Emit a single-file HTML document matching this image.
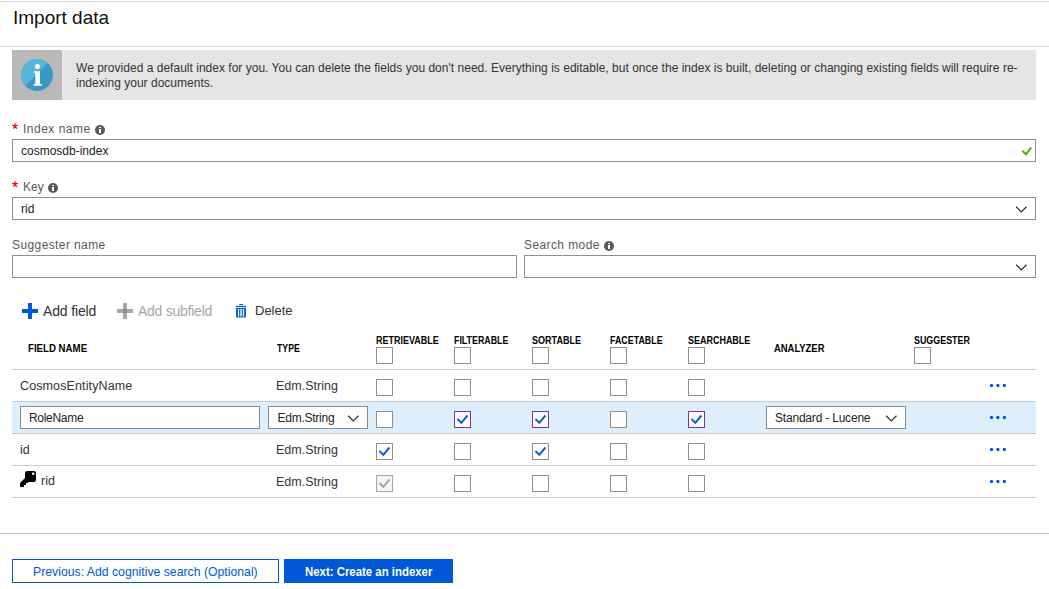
<!DOCTYPE html>
<html><head><meta charset="utf-8">
<style>
*{margin:0;padding:0;box-sizing:border-box}
html,body{width:1049px;height:589px;overflow:hidden;background:#fff}
body{position:relative;font-family:"Liberation Sans",sans-serif;color:#333;-webkit-font-smoothing:antialiased}
.a{position:absolute}
.t{position:absolute;white-space:nowrap;line-height:1}
.hl{position:absolute;height:1px;background:#c9c9c9}
.inp{position:absolute;border:1px solid #8f8f8f;background:#fff}
.cb{position:absolute;width:17px;height:17px;border:1px solid #8f8f8f;background:#fff}
.lbl{font-size:12px;color:#595959}
.star{color:#e00b1c;font-size:13px}
.ii{position:absolute;width:10px;height:10px;border-radius:50%;background:#5a5a5a}
.ii:before{content:"";position:absolute;left:4px;top:2px;width:2px;height:1px;background:#fff}
.ii:after{content:"";position:absolute;left:4px;top:4px;width:2px;height:4px;background:#fff}
.th{transform-origin:0 0;font-size:10px;font-weight:bold;color:#000}
.rt{font-size:12.5px;color:#333}
.dots{position:absolute;width:17px;height:4px}
.dots i{position:absolute;top:0;width:3.4px;height:3.4px;border-radius:50%;background:#0058d6}
</style></head><body>

<!-- header -->
<div class="hl" style="left:0;top:1px;width:1049px;background:#d3d3d3"></div>
<div class="t" style="left:13px;top:8px;font-size:19px;color:#111">Import data</div>
<div class="hl" style="left:0;top:46px;width:1049px;background:#d6d6d6"></div>

<!-- info box -->
<div class="a" style="left:12px;top:50px;width:1024px;height:50px;background:#e5e5e5"></div>
<div class="a" style="left:12px;top:50px;width:50px;height:50px;background:#b9b9b9"></div>
<svg class="a" style="left:21px;top:59px" width="32" height="32" viewBox="0 0 32 32">
 <defs><clipPath id="cc"><circle cx="16" cy="16" r="16"/></clipPath></defs>
 <g clip-path="url(#cc)">
  <rect width="32" height="32" fill="#3999c6"/>
  <polygon points="0,0 31,0 0,31" fill="#59b4d9"/>
 </g>
 <circle cx="16.4" cy="7.4" r="2.5" fill="#fff"/>
 <path d="M12.9 12.2 H19 V24.9 H20.7 V26.8 H12.7 V24.9 H14.3 V13.8 H12.9 Z" fill="#fff"/>
</svg>
<div class="t" style="left:76px;top:61px;font-size:12px;line-height:15px;color:#333;letter-spacing:0.016px;white-space:normal;width:960px">We provided a default index for you. You can delete the fields you don't need. Everything is editable, but once the index is built, deleting or changing existing fields will require re-<br>indexing your documents.</div>

<!-- index name -->
<svg class="a" style="left:11px;top:122px" width="8" height="8" viewBox="0 0 8 8"><path d="M4 4V1.7M4 4L1.6 3.4M4 4L6.4 3.4M4 4L2.5 6.3M4 4L5.5 6.3" stroke="#e81123" stroke-width="1.25" stroke-linecap="round" fill="none"/></svg>
<div class="t lbl" style="left:23px;top:123px;letter-spacing:0.5px">Index name</div>
<div class="ii" style="left:95px;top:125px"></div>
<div class="inp" style="left:12px;top:139px;width:1024px;height:23px"></div>
<div class="t" style="left:21px;top:145px;font-size:12px;color:#222">cosmosdb-index</div>
<svg class="a" style="left:1020px;top:145px" width="14" height="12" viewBox="0 0 14 12"><path d="M2.3 5.8 L6.1 9.3 L11.2 2.5" fill="none" stroke="#57a300" stroke-width="2"/></svg>

<!-- key -->
<svg class="a" style="left:11px;top:180px" width="8" height="8" viewBox="0 0 8 8"><path d="M4 4V1.7M4 4L1.6 3.4M4 4L6.4 3.4M4 4L2.5 6.3M4 4L5.5 6.3" stroke="#e81123" stroke-width="1.25" stroke-linecap="round" fill="none"/></svg>
<div class="t lbl" style="left:23px;top:181px">Key</div>
<div class="ii" style="left:48px;top:183px"></div>
<div class="inp" style="left:12px;top:197px;width:1024px;height:23px"></div>
<div class="t" style="left:21px;top:203px;font-size:12px;color:#222">rid</div>
<svg class="a" style="left:1014px;top:203px" width="14" height="12" viewBox="0 0 14 12"><path d="M2.1 3.7 L7.3 8.9 L12.5 3.7" fill="none" stroke="#333" stroke-width="1.3"/></svg>

<!-- suggester / search mode -->
<div class="t lbl" style="left:12px;top:239px;letter-spacing:0.4px">Suggester name</div>
<div class="inp" style="left:12px;top:255px;width:505px;height:23px"></div>
<div class="t lbl" style="left:524px;top:239px;letter-spacing:0.4px">Search mode</div>
<div class="ii" style="left:604px;top:241px"></div>
<div class="inp" style="left:524px;top:255px;width:512px;height:23px"></div>
<svg class="a" style="left:1014px;top:261px" width="14" height="12" viewBox="0 0 14 12"><path d="M2.1 3.7 L7.3 8.9 L12.5 3.7" fill="none" stroke="#333" stroke-width="1.3"/></svg>

<!-- toolbar -->
<svg class="a" style="left:22px;top:303px" width="16" height="16" viewBox="0 0 16 16"><path d="M6 0H10V6H16V10H10V16H6V10H0V6H6Z" fill="#0058d8"/></svg>
<div class="t" style="left:43px;top:304px;font-size:14px;letter-spacing:-0.15px;color:#333">Add field</div>
<svg class="a" style="left:117px;top:303px" width="16" height="16" viewBox="0 0 16 16"><path d="M6 0H10V6H16V10H10V16H6V10H0V6H6Z" fill="#a6a6a6"/><rect x="6" y="6" width="4" height="4" fill="#8f8f8f"/></svg>
<div class="t" style="left:138px;top:304px;font-size:14px;letter-spacing:-0.25px;color:#a6a6a6">Add subfield</div>
<svg class="a" style="left:235px;top:303px" width="12" height="15" viewBox="0 0 12 15">
 <rect x="4.2" y="0.9" width="3.9" height="1" rx="0.5" fill="#0a62d6"/>
 <rect x="0.8" y="2.8" width="10.4" height="1.1" rx="0.4" fill="#0a62d6"/>
 <path d="M1 4.8H11V13.4Q11 14.6 9.8 14.6H2.2Q1 14.6 1 13.4Z" fill="#0a62d6"/>
 <rect x="3" y="5.9" width="1.1" height="7.6" fill="#fff"/>
 <rect x="5.2" y="5.9" width="1.7" height="7.6" fill="#c9dcf5"/>
 <rect x="7.9" y="5.9" width="1.1" height="7.6" fill="#fff"/>
</svg>
<div class="t" style="left:255px;top:304px;font-size:13px;letter-spacing:0px;color:#333">Delete</div>

<!-- table header -->
<div class="t th" style="left:28px;top:344px;transform:scaleX(0.967)">FIELD NAME</div>
<div class="t th" style="left:277px;top:344px;transform:scaleX(0.874)">TYPE</div>
<div class="t th" style="left:376px;top:336px;transform:scaleX(0.899)">RETRIEVABLE</div>
<div class="cb" style="left:376px;top:347px"></div>
<div class="t th" style="left:454px;top:336px;transform:scaleX(0.884)">FILTERABLE</div>
<div class="cb" style="left:454px;top:347px"></div>
<div class="t th" style="left:532px;top:336px;transform:scaleX(0.904)">SORTABLE</div>
<div class="cb" style="left:532px;top:347px"></div>
<div class="t th" style="left:610px;top:336px;transform:scaleX(0.888)">FACETABLE</div>
<div class="cb" style="left:610px;top:347px"></div>
<div class="t th" style="left:688px;top:336px;transform:scaleX(0.897)">SEARCHABLE</div>
<div class="cb" style="left:688px;top:347px"></div>
<div class="t th" style="left:774px;top:344px;transform:scaleX(0.943)">ANALYZER</div>
<div class="t th" style="left:914px;top:336px;transform:scaleX(0.89)">SUGGESTER</div>
<div class="cb" style="left:914px;top:347px"></div>
<div class="hl" style="left:12px;top:369px;width:1024px"></div>

<!-- row 1 -->
<div class="t rt" style="left:20px;top:380px;letter-spacing:0.12px">CosmosEntityName</div>
<div class="t rt" style="left:276px;top:380px">Edm.String</div>
<div class="cb" style="left:376px;top:379px"></div>
<div class="cb" style="left:454px;top:379px"></div>
<div class="cb" style="left:532px;top:379px"></div>
<div class="cb" style="left:610px;top:379px"></div>
<div class="cb" style="left:688px;top:379px"></div>
<svg class="a" style="left:988px;top:382px" width="20" height="8" viewBox="0 0 20 8"><circle cx="3.5" cy="3.5" r="1.65" fill="#0058d6"/><circle cx="9.9" cy="3.5" r="1.65" fill="#0058d6"/><circle cx="16.4" cy="3.5" r="1.65" fill="#0058d6"/></svg>
<div class="hl" style="left:12px;top:401px;width:1024px"></div>

<!-- row 2 selected -->
<div class="a" style="left:12px;top:402px;width:1024px;height:31px;background:#ddeefc"></div>
<div class="inp" style="left:20px;top:406px;width:240px;height:23px;border-color:#8a8a8a"></div>
<div class="t" style="left:29px;top:412px;font-size:12px;letter-spacing:-0.3px;color:#222">RoleName</div>
<div class="inp" style="left:268px;top:406px;width:100px;height:23px;border-color:#8a8a8a"></div>
<div class="t" style="left:277.5px;top:412px;font-size:12px;letter-spacing:-0.25px;color:#222">Edm.String</div>
<svg class="a" style="left:346px;top:412px" width="14" height="12" viewBox="0 0 14 12"><path d="M2.1 3.7 L7.3 8.9 L12.5 3.7" fill="none" stroke="#333" stroke-width="1.3"/></svg>
<div class="cb" style="left:376px;top:411px"></div>
<div class="cb" style="left:454px;top:411px;border-color:#8a2da5"><svg class="a" style="left:0;top:0" width="15" height="15" viewBox="0 0 15 15"><path d="M2.4 7 L6.4 10.8 L12.4 3.5" fill="none" stroke="#0a5fd8" stroke-width="2"/></svg></div>
<div class="cb" style="left:532px;top:411px;border-color:#8a2da5"><svg class="a" style="left:0;top:0" width="15" height="15" viewBox="0 0 15 15"><path d="M2.4 7 L6.4 10.8 L12.4 3.5" fill="none" stroke="#0a5fd8" stroke-width="2"/></svg></div>
<div class="cb" style="left:610px;top:411px"></div>
<div class="cb" style="left:688px;top:411px;border-color:#8a2da5"><svg class="a" style="left:0;top:0" width="15" height="15" viewBox="0 0 15 15"><path d="M2.4 7 L6.4 10.8 L12.4 3.5" fill="none" stroke="#0a5fd8" stroke-width="2"/></svg></div>
<div class="inp" style="left:766px;top:406px;width:140px;height:23px;border-color:#8a8a8a"></div>
<div class="t" style="left:775px;top:412px;font-size:12px;letter-spacing:-0.2px;color:#222">Standard - Lucene</div>
<svg class="a" style="left:884px;top:412px" width="14" height="12" viewBox="0 0 14 12"><path d="M2.1 3.7 L7.3 8.9 L12.5 3.7" fill="none" stroke="#333" stroke-width="1.3"/></svg>
<svg class="a" style="left:988px;top:414px" width="20" height="8" viewBox="0 0 20 8"><circle cx="3.5" cy="3.5" r="1.65" fill="#0058d6"/><circle cx="9.9" cy="3.5" r="1.65" fill="#0058d6"/><circle cx="16.4" cy="3.5" r="1.65" fill="#0058d6"/></svg>
<div class="hl" style="left:12px;top:433px;width:1024px"></div>

<!-- row 3 -->
<div class="t rt" style="left:20px;top:444px">id</div>
<div class="t rt" style="left:276px;top:444px">Edm.String</div>
<div class="cb" style="left:376px;top:443px"><svg class="a" style="left:0;top:0" width="15" height="15" viewBox="0 0 15 15"><path d="M2.4 7 L6.4 10.8 L12.4 3.5" fill="none" stroke="#0a5fd8" stroke-width="2"/></svg></div>
<div class="cb" style="left:454px;top:443px"></div>
<div class="cb" style="left:532px;top:443px"><svg class="a" style="left:0;top:0" width="15" height="15" viewBox="0 0 15 15"><path d="M2.4 7 L6.4 10.8 L12.4 3.5" fill="none" stroke="#0a5fd8" stroke-width="2"/></svg></div>
<div class="cb" style="left:610px;top:443px"></div>
<div class="cb" style="left:688px;top:443px"></div>
<svg class="a" style="left:988px;top:446px" width="20" height="8" viewBox="0 0 20 8"><circle cx="3.5" cy="3.5" r="1.65" fill="#0058d6"/><circle cx="9.9" cy="3.5" r="1.65" fill="#0058d6"/><circle cx="16.4" cy="3.5" r="1.65" fill="#0058d6"/></svg>
<div class="hl" style="left:12px;top:465px;width:1024px"></div>

<!-- row 4 -->
<svg class="a" style="left:16px;top:468px" width="24" height="22" viewBox="0 0 24 22">
 <rect x="9" y="3" width="11" height="11" rx="2.2" fill="#000"/>
 <path d="M10 9 L4 15 V19 H8 V17 H10 V15 H12 V13 Z" fill="#000"/>
 <circle cx="17.2" cy="5.8" r="1.3" fill="#fff"/>
</svg>
<div class="t rt" style="left:41px;top:475px">rid</div>
<div class="t rt" style="left:276px;top:476px">Edm.String</div>
<div class="cb" style="left:376px;top:475px;background:#f4f4f4;border-color:#a6a6a6"><svg class="a" style="left:0;top:0" width="15" height="15" viewBox="0 0 15 15"><path d="M2.4 7 L6.4 10.8 L12.4 3.5" fill="none" stroke="#a6a6a6" stroke-width="2"/></svg></div>
<div class="cb" style="left:454px;top:475px"></div>
<div class="cb" style="left:532px;top:475px"></div>
<div class="cb" style="left:610px;top:475px"></div>
<div class="cb" style="left:688px;top:475px"></div>
<svg class="a" style="left:988px;top:478px" width="20" height="8" viewBox="0 0 20 8"><circle cx="3.5" cy="3.5" r="1.65" fill="#0058d6"/><circle cx="9.9" cy="3.5" r="1.65" fill="#0058d6"/><circle cx="16.4" cy="3.5" r="1.65" fill="#0058d6"/></svg>
<div class="hl" style="left:12px;top:497px;width:1024px"></div>

<!-- footer -->
<div class="hl" style="left:0;top:533px;width:1049px;background:#bcbcbc"></div>
<div class="a" style="left:12px;top:559px;width:267px;height:24px;border:1px solid #0058d6;background:#fff"></div>
<div class="t" style="left:33px;top:566px;font-size:12.25px;letter-spacing:0.0px;color:#0058d6">Previous: Add cognitive search (Optional)</div>
<div class="a" style="left:284px;top:559px;width:169px;height:24px;background:#0058d6"></div>
<div class="t" style="left:305px;top:566px;font-size:12px;font-weight:bold;color:#fff;transform-origin:0 0;transform:scaleX(0.95)">Next: Create an indexer</div>

</body></html>
